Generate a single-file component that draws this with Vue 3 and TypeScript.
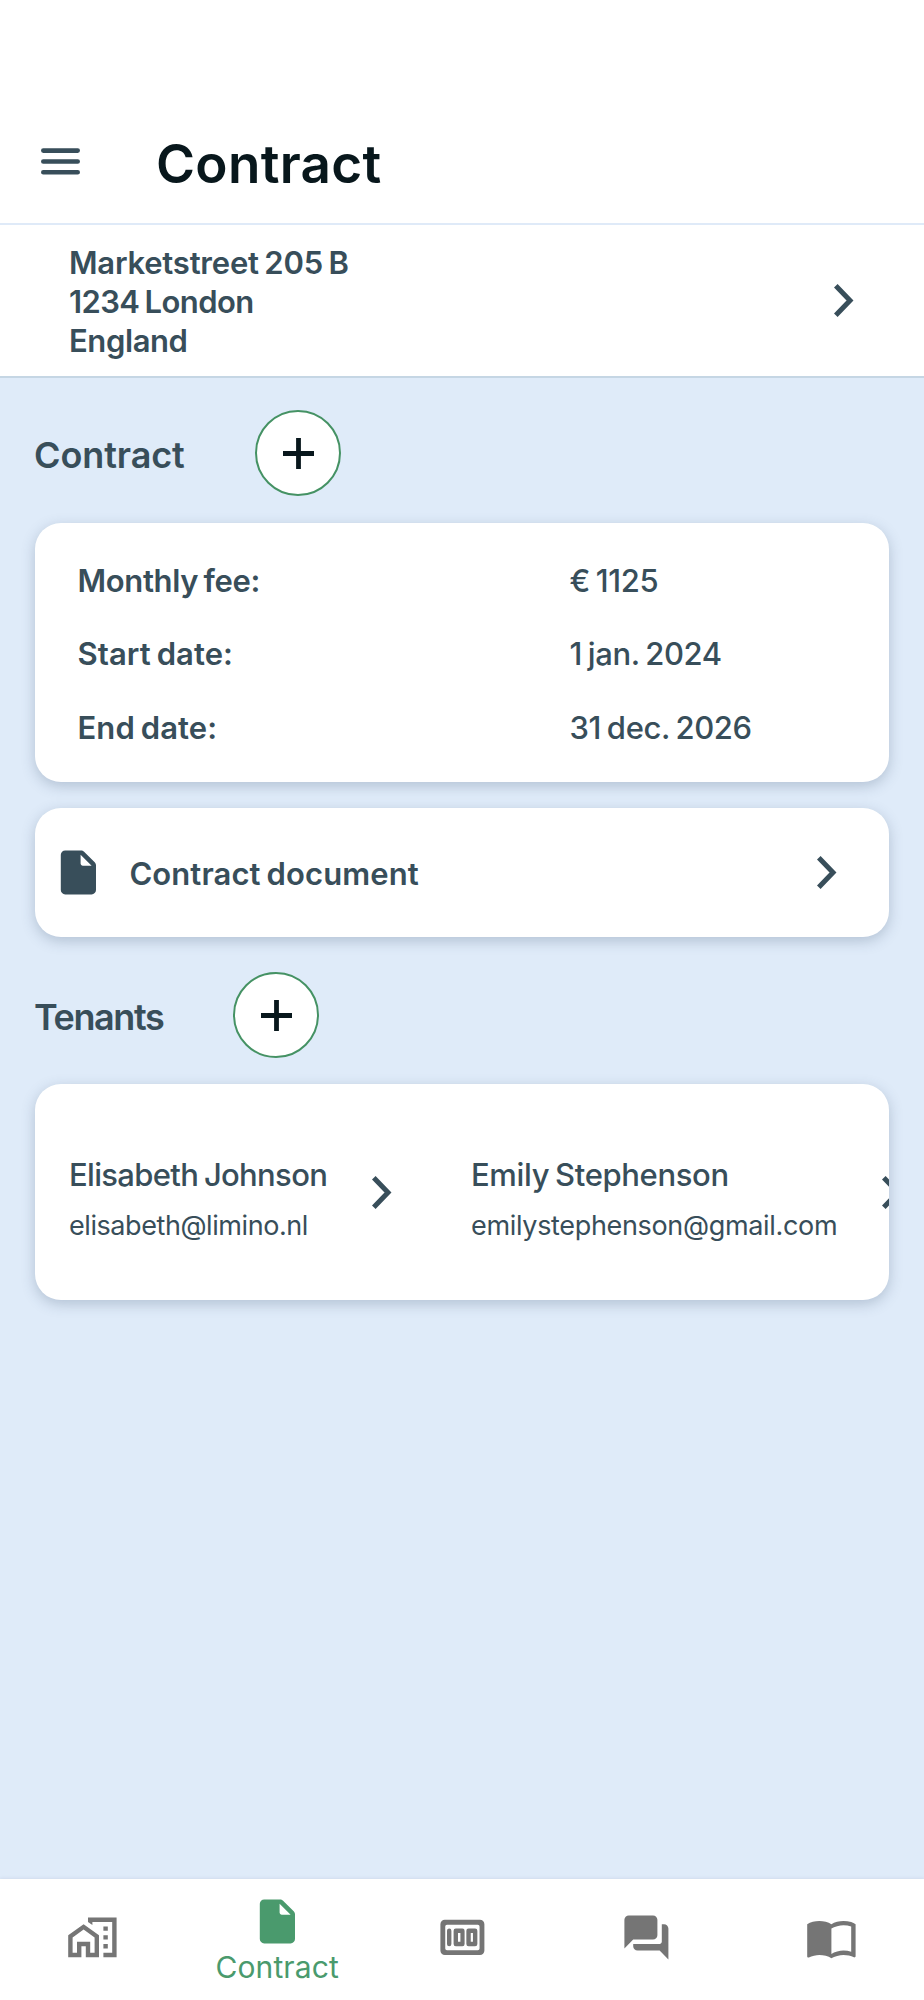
<script setup lang="ts">
interface Term { label: string; value: string; tight: string }
interface Tenant { name: string; email: string; cls: string }

const address = [
  { text: 'Marketstreet 205 B', cls: 'street' },
  { text: '1234 London', cls: 'city' },
  { text: 'England', cls: 'country' },
]

const terms: Term[] = [
  { label: 'Monthly fee:', value: '€ 1125', tight: 'fee' },
  { label: 'Start date:', value: '1 jan. 2024', tight: 'start' },
  { label: 'End date:', value: '31 dec. 2026', tight: 'end' },
]

const tenants: Tenant[] = [
  { name: 'Elisabeth Johnson', email: 'elisabeth@limino.nl', cls: 'first' },
  { name: 'Emily Stephenson', email: 'emilystephenson@gmail.com', cls: 'second' },
]

const chevron = 'M1.8 1.8L16 16.5L1.8 31.2'
const docIcon =
  'M4 4v16c0 1.1.9 2 2 2h12c1.1 0 2-.9 2-2V8.83c0-.53-.21-1.04-.59-1.41l-4.83-4.83c-.37-.38-.88-.59-1.41-.59H6c-1.1 0-2 .9-2 2zm9 4V4L18 9H14c-.55 0-1-.45-1-1z'

const tabs = [
  {
    id: 'home',
    path: 'M1 11v10h6v-5h2v5h6V11L8 6zM13 19h-2v-5H5v5H3v-7l5-3.55 5 3.55zM10 3v1.97l2 1.43V5h9v14h-4v2h6V3zM17 7h2v2h-2zM17 11h2v2h-2zM17 15h2v2h-2z',
  },
  { id: 'contract', label: 'Contract', path: docIcon },
  {
    id: 'payments',
    path: 'M4 4h16a2 2 0 0 1 2 2v12a2 2 0 0 1-2 2H4a2 2 0 0 1-2-2V6a2 2 0 0 1 2-2zM5 6.2a.8.8 0 0 0-.8.8v10a.8.8 0 0 0 .8.8h14a.8.8 0 0 0 .8-.8V7a.8.8 0 0 0-.8-.8zM6 8a1 1 0 0 1 1 1v6a1 1 0 0 1-2 0V9a1 1 0 0 1 1-1zM9 8h3a1 1 0 0 1 1 1v6a1 1 0 0 1-1 1H9a1 1 0 0 1-1-1V9a1 1 0 0 1 1-1zM10 10v4h1.1v-4zM14.8 8h3a1 1 0 0 1 1 1v6a1 1 0 0 1-1 1h-3a1 1 0 0 1-1-1V9a1 1 0 0 1 1-1zM15.8 10v4h1v-4z',
  },
  {
    id: 'chat',
    path: 'M20 6h-1v8c0 .55-.45 1-1 1H6v1c0 1.1.9 2 2 2h10l4 4V8c0-1.1-.9-2-2-2zm-3 5V4c0-1.1-.9-2-2-2H4c-1.1 0-2 .9-2 2v13l4-4h9c1.1 0 2-.9 2-2z',
  },
  {
    id: 'guide',
    path: 'M21 5c-1.11-.35-2.33-.5-3.5-.5-1.95 0-4.05.4-5.5 1.5-1.45-1.1-3.55-1.5-5.5-1.5S2.45 4.9 1 6v14.65c0 .25.25.5.5.5.1 0 .15-.05.25-.05C3.1 20.45 5.05 20 6.5 20c1.95 0 4.05.4 5.5 1.5 1.35-.85 3.8-1.5 5.5-1.5 1.65 0 3.35.3 4.75 1.05.1.05.15.05.25.05.25 0 .5-.25.5-.5V6c-.6-.45-1.25-.75-2-1zm0 13.5c-1.1-.35-2.3-.5-3.5-.5-1.7 0-4.15.65-5.5 1.5V8c1.35-.85 3.8-1.5 5.5-1.5 1.2 0 2.4.15 3.5.5v11.5z',
  },
]
</script>

<template>
  <div class="screen">
    <header class="topbar">
      <svg class="menu" viewBox="0 0 39 27">
        <path d="M2.3 2.6H36.7M2.3 13.5H36.7M2.3 24.3H36.7" />
      </svg>
      <h1>Contract</h1>
    </header>

    <section class="address">
      <div>
        <p v-for="line in address" :key="line.text" :class="line.cls">{{ line.text }}</p>
      </div>
      <svg class="chevron" viewBox="0 0 20 33"><path :d="chevron" /></svg>
    </section>

    <main>
      <div class="section-head">
        <h2 class="h-contract">Contract</h2>
        <button type="button" aria-label="Add contract">
          <svg viewBox="0 0 31 31"><path d="M15.5 0V31M0 15.5H31" /></svg>
        </button>
      </div>

      <dl class="card terms">
        <div v-for="t in terms" :key="t.label" :class="['term', t.tight]">
          <dt>{{ t.label }}</dt>
          <dd>{{ t.value }}</dd>
        </div>
      </dl>

      <div class="card document">
        <svg class="icon" viewBox="0 0 24 24"><path fill-rule="evenodd" :d="docIcon" /></svg>
        <span>Contract document</span>
        <svg class="chevron" viewBox="0 0 20 33"><path :d="chevron" /></svg>
      </div>

      <div class="section-head second-head">
        <h2 class="h-tenants">Tenants</h2>
        <button type="button" aria-label="Add tenant">
          <svg viewBox="0 0 31 31"><path d="M15.5 0V31M0 15.5H31" /></svg>
        </button>
      </div>

      <div class="card tenants">
        <div v-for="p in tenants" :key="p.email" :class="['tenant', p.cls]">
          <div class="who">
            <p class="name">{{ p.name }}</p>
            <p class="email">{{ p.email }}</p>
          </div>
          <svg class="chevron" viewBox="0 0 20 33"><path :d="chevron" /></svg>
        </div>
      </div>
    </main>

    <nav>
      <div v-for="tab in tabs" :key="tab.id" :class="['tab', { active: tab.label }]">
        <svg class="icon" viewBox="0 0 24 24"><path fill-rule="evenodd" :d="tab.path" /></svg>
        <span v-if="tab.label">{{ tab.label }}</span>
      </div>
    </nav>
  </div>
</template>

<style>
body {
  margin: 0;
}
</style>

<style scoped>
* {
  box-sizing: border-box;
}
.screen {
  display: flex;
  flex-direction: column;
  width: 924px;
  height: 2000px;
  overflow: hidden;
  background: #dfebf9;
  color: #384e5a;
  font-family: Inter, "Liberation Sans", sans-serif;
  font-size: 31px;
}
h1, h2, p, dl, dd {
  margin: 0;
}
svg {
  display: block;
  flex: none;
}
.topbar {
  display: flex;
  align-items: flex-start;
  height: 225px;
  flex: none;
  padding: 134px 0 0 41px;
  background: #fff;
  border-bottom: 2px solid #dfeaf8;
}
.menu {
  width: 39px;
  height: 27px;
  margin-top: 14px;
  fill: none;
  stroke: #384e5a;
  stroke-width: 4.6;
  stroke-linecap: round;
}
h1 {
  margin-left: 76px;
  font-size: 53px;
  line-height: 60px;
  font-weight: 560;
  letter-spacing: 0.3px;
  color: #08171c;
}
.address {
  display: flex;
  justify-content: space-between;
  height: 153px;
  flex: none;
  padding: 18px 70px 0 69px;
  background: #fff;
  border-bottom: 2px solid #c5d6e4;
  line-height: 39px;
  font-weight: 560;
  word-spacing: -2px;
  letter-spacing: -0.22px;
}
.address .chevron {
  margin-top: 40.5px;
}
.city {
  letter-spacing: -0.6px;
}
.country {
  letter-spacing: -0.4px;
}
.chevron {
  width: 20px;
  height: 33px;
  fill: none;
  stroke: #384e5a;
  stroke-width: 5;
}
main {
  flex: 1;
  padding: 32px 35px 0;
}
.section-head {
  display: flex;
  align-items: center;
  gap: 70px;
  margin-bottom: 27px;
}
.second-head {
  margin: 35px 0 26px;
}
h2 {
  margin-top: 4px;
  margin-left: -1px;
  font-size: 36px;
  line-height: 44px;
  font-weight: 560;
  white-space: nowrap;
}
.h-contract {
  width: 151px;
  letter-spacing: -0.1px;
}
.h-tenants {
  width: 129px;
  letter-spacing: -1.4px;
}
button {
  display: flex;
  align-items: center;
  justify-content: center;
  width: 86px;
  height: 86px;
  padding: 0;
  border: 2px solid #459264;
  border-radius: 50%;
  background: #fff;
}
button svg {
  width: 31px;
  height: 31px;
  stroke: #08171c;
  stroke-width: 4.8;
}
.card {
  background: #fff;
  border-radius: 26px;
  box-shadow: 0 4px 14px rgba(50, 75, 105, 0.26);
}
.terms {
  height: 259px;
  padding: 20.5px 44px 0 42.5px;
  word-spacing: -2px;
}
.term {
  display: grid;
  grid-template-columns: 492px 1fr;
  height: 73.5px;
  line-height: 73.5px;
}
dt {
  font-weight: 560;
  letter-spacing: 0.08px;
}
.fee dt {
  letter-spacing: -0.35px;
}
dd {
  font-weight: 480;
  letter-spacing: -0.4px;
}
.document {
  display: flex;
  align-items: center;
  height: 129px;
  margin-top: 26px;
  padding: 0 52px 0 16.6px;
  font-weight: 560;
  word-spacing: -2px;
  letter-spacing: 0.1px;
}
.document span {
  margin: 2px auto 0 25px;
}
.icon {
  width: 52.8px;
  height: 52.8px;
  fill: currentColor;
}
.tenants {
  display: flex;
  gap: 78px;
  height: 216px;
  padding-left: 34px;
  overflow: hidden;
}
.tenant {
  display: flex;
  flex: none;
  align-items: center;
}
.tenant .chevron {
  margin-left: -1px;
  margin-right: 1px;
}
.who {
  margin-top: 17px;
  line-height: 40px;
  white-space: nowrap;
}
.first .who {
  width: 304px;
}
.second .who {
  width: 412px;
}
.name {
  margin-bottom: 11px;
  font-weight: 480;
  word-spacing: -2px;
  letter-spacing: -0.66px;
}
.second .name {
  letter-spacing: -0.35px;
}
.email {
  font-size: 27px;
  letter-spacing: -0.43px;
}
.second .email {
  letter-spacing: -0.33px;
}
nav {
  display: grid;
  grid-template-columns: repeat(5, 1fr);
  height: 121px;
  flex: none;
  background: #fff;
  box-shadow: 0 -1px 3px rgba(90, 90, 140, 0.1);
  color: #757575;
}
.tab {
  display: flex;
  flex-direction: column;
  align-items: center;
  padding-top: 31.6px;
}
.active {
  padding-top: 16.4px;
  color: #4a9a6d;
}
.tab span {
  margin-top: 1px;
  font-size: 30px;
  line-height: 36px;
  letter-spacing: 0.1px;
}
</style>
